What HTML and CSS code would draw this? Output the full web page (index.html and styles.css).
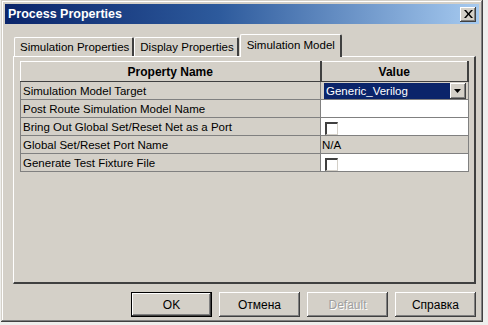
FILE: index.html
```html
<!DOCTYPE html>
<html lang="en">

<head>
    <meta charset="UTF-8">
    <title>Process Properties</title>
    <link rel="stylesheet" href="styles.css">
</head>

<body>
    <div class="dialog">
        <div class="titlebar">
            <span class="title">Process Properties</span>
            <button class="close" type="button">
                <svg width="9" height="8" viewBox="0 0 9 8">
                    <path d="M0 0h2l2.5 3 2.5-3h2l-3.5 4 3.5 4h-2l-2.5-3-2.5 3h-2l3.5-4z" fill="#000"/>
                </svg>
            </button>
        </div>

        <div class="tabs">
            <div class="tab">Simulation Properties</div>
            <div class="tab">Display Properties</div>
            <div class="tab active">Simulation Model</div>
        </div>

        <div class="panel">
            <table class="grid">
                <thead>
                    <tr>
                        <th class="col-name">Property Name</th>
                        <th class="col-value">Value</th>
                    </tr>
                </thead>
                <tbody>
                    <tr>
                        <td class="name">Simulation Model Target</td>
                        <td class="value">
                            <div class="select">
                                <span class="selected">Generic_Verilog</span>
                                <span class="arrow">
                                    <svg width="7" height="4" viewBox="0 0 7 4"><path d="M0 0h7l-3.5 4z" fill="#000"/></svg>
                                </span>
                            </div>
                        </td>
                    </tr>
                    <tr>
                        <td class="name">Post Route Simulation Model Name</td>
                        <td class="value white"></td>
                    </tr>
                    <tr>
                        <td class="name">Bring Out Global Set/Reset Net as a Port</td>
                        <td class="value white"><span class="check"></span></td>
                    </tr>
                    <tr>
                        <td class="name">Global Set/Reset Port Name</td>
                        <td class="value">N/A</td>
                    </tr>
                    <tr>
                        <td class="name">Generate Test Fixture File</td>
                        <td class="value white"><span class="check"></span></td>
                    </tr>
                </tbody>
            </table>
        </div>

        <div class="buttons">
            <button class="button default" type="button">OK</button>
            <button class="button" type="button">Отмена</button>
            <button class="button" type="button" disabled>Default</button>
            <button class="button" type="button">Справка</button>
        </div>
    </div>
</body>
</html>
```

FILE: styles.css
```css
* {
    box-sizing: border-box;
}

body {
    margin: 0;
    background-color: #eeeeec;
    font-family: "Liberation Sans", Arial, sans-serif;
    font-size: 11.5px;
    color: #000;
}

.dialog {
    width: 482px;
    height: 322px;
    margin-left: 1px;
    padding: 4px;
    background-color: #d4d0c8;
    box-shadow: inset -1px -1px #404040, inset 1px 1px #d4d0c8,
        inset -2px -2px #808080, inset 2px 2px #fff;
    display: flex;
    flex-direction: column;
}

.titlebar {
    height: 20px;
    display: flex;
    align-items: center;
    justify-content: space-between;
    padding: 0 3px 0 3px;
    background: linear-gradient(to right, #0a246a 0%, #2d5a9c 45%, #a6caf0 100%);
}

.title {
    color: #fff;
    font-weight: bold;
    font-size: 12.5px;
}

.close {
    width: 16px;
    height: 15px;
    padding: 0;
    border: none;
    background-color: #d4d0c8;
    box-shadow: inset -1px -1px #404040, inset 1px 1px #fff,
        inset -2px -2px #808080;
    display: flex;
    align-items: center;
    justify-content: center;
}

/* tabs */

.tabs {
    display: flex;
    align-items: flex-end;
    height: 23px;
    margin-top: 9px;
    padding-left: 9px;
    position: relative;
    z-index: 1;
}

.tab {
    height: 19px;
    padding: 3px 3px 0 5px;
    border-top: 1px solid #fff;
    border-left: 1px solid #fff;
    border-right: 2px solid #404040;
    border-radius: 2px 2px 0 0;
    background-color: #d4d0c8;
    white-space: nowrap;
}

.tab.active {
    height: 23px;
    margin-left: 1px;
    padding: 4px 5px 0 6px;
    margin-bottom: -1px;
}

.panel {
    height: 228px;
    margin: 0 3px 0 8px;
    padding: 4px 7px 0 6px;
    border-top: 1px solid #fff;
    border-left: 1px solid #fff;
    border-right: 2px solid #404040;
    border-bottom: 2px solid #404040;
}

/* property grid */

.grid {
    width: 449px;
    border-collapse: collapse;
    table-layout: fixed;
}

.grid th {
    height: 20px;
    font-size: 12px;
    font-weight: bold;
    background-color: #d4d0c8;
    border-top: 1px solid #fff;
    border-left: 1px solid #fff;
    border-right: 2px solid #404040;
    border-bottom: 1px solid #404040;
}

.col-name {
    width: 300px;
}

.grid td {
    height: 18px;
    padding: 0 0 0 2px;
    border: 1px solid #808080;
    background-color: #d4d0c8;
    white-space: nowrap;
    overflow: hidden;
}

.grid td.white {
    background-color: #fff;
}

.grid td.value {
    padding-left: 1px;
}

.select {
    display: flex;
    height: 16px;
    margin: 1px 2px 0 2px;
    background-color: #fff;
}

.selected {
    flex: 1;
    padding-left: 2px;
    line-height: 16px;
    color: #fff;
    background-color: #0a246a;
}

.arrow {
    width: 16px;
    display: flex;
    align-items: center;
    justify-content: center;
    background-color: #d4d0c8;
    box-shadow: inset -1px -1px #404040, inset 1px 1px #fff,
        inset -2px -2px #808080;
}

.check {
    display: block;
    width: 13px;
    height: 13px;
    margin: 3px 0 0 3px;
    background-color: #fff;
    border-top: 2px solid #404040;
    border-left: 2px solid #404040;
    border-right: 1px solid #d4d0c8;
    border-bottom: 1px solid #d4d0c8;
}

/* dialog buttons */

.buttons {
    display: flex;
    justify-content: flex-end;
    gap: 7px;
    margin-top: 8px;
    padding-right: 3px;
}

.button {
    width: 81px;
    height: 25px;
    font-family: "Liberation Sans", Arial, sans-serif;
    font-size: 12px;
    color: #000;
    background-color: #d4d0c8;
    border: none;
    box-shadow: inset -1px -1px #404040, inset 1px 1px #fff,
        inset -2px -2px #808080;
}

.button.default {
    box-shadow: inset 0 0 0 1px #000, inset -2px -2px #404040,
        inset 2px 2px #fff, inset -3px -3px #808080;
}

.button:disabled {
    color: #a0a0a0;
    text-shadow: 1px 1px #fff;
}
```
